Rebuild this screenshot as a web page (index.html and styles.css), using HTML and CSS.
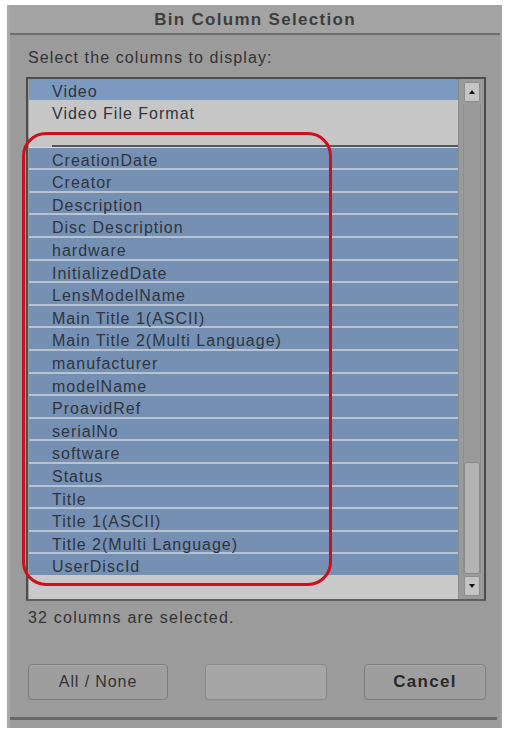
FILE: index.html
```html
<!DOCTYPE html>
<html>
<head>
<meta charset="utf-8">
<link rel="stylesheet" href="styles.css">
</head>
<body>
<div class="dialog">
  <div class="titlebar">Bin Column Selection</div>
  <div class="body">
    <div class="label">Select the columns to display:</div>
    <div class="listbox">
      <div class="rows">
        <div class="row sel top">Video</div>
        <div class="row plain">Video File Format</div>
        <div class="row plain blank"></div>
        <div class="row sel">CreationDate</div>
        <div class="row sel">Creator</div>
        <div class="row sel">Description</div>
        <div class="row sel">Disc Description</div>
        <div class="row sel">hardware</div>
        <div class="row sel">InitializedDate</div>
        <div class="row sel">LensModelName</div>
        <div class="row sel">Main Title 1(ASCII)</div>
        <div class="row sel">Main Title 2(Multi Language)</div>
        <div class="row sel">manufacturer</div>
        <div class="row sel">modelName</div>
        <div class="row sel">ProavidRef</div>
        <div class="row sel">serialNo</div>
        <div class="row sel">software</div>
        <div class="row sel">Status</div>
        <div class="row sel">Title</div>
        <div class="row sel">Title 1(ASCII)</div>
        <div class="row sel">Title 2(Multi Language)</div>
        <div class="row sel last">UserDiscId</div>
        <div class="row plain tail"></div>
      </div>
      <div class="scrollbar">
        <div class="sbtn"><span class="tri up"></span></div>
        <div class="track"><div class="thumb"></div></div>
        <div class="sbtn"><span class="tri down"></span></div>
      </div>
    </div>
    <div class="status">32 columns are selected.</div>
    <div class="buttons">
      <div class="btn">All / None</div>
      <div class="btn ghost"></div>
      <div class="btn bold">Cancel</div>
    </div>
  </div>
  <div class="footer"></div>
  <div class="highlight"></div>
</div>
</body>
</html>
```

FILE: styles.css
```css
html, body {
  margin: 0;
  padding: 0;
  background: #ffffff;
}
body {
  font-family: "Liberation Sans", Arial, sans-serif;
  color: #2b2b2b;
}
.dialog {
  position: relative;
  margin: 5px 0 0 7px;
  width: 495px;
  height: 723px;
  background: #9b9b9b;
  display: flex;
  flex-direction: column;
  box-sizing: border-box;
  border-left: 3px solid #a9a9a9;
  border-right: 2px solid #a4a4a4;
}
.titlebar {
  height: 30px;
  box-sizing: border-box;
  background: #a3a3a3;
  border-bottom: 2px solid #6f6f6f;
  text-align: center;
  font-weight: bold;
  font-size: 17px;
  letter-spacing: 1.3px;
  line-height: 30px;
  color: #3d3d3d;
  flex: none;
}
.body {
  padding: 0 14px 0 16px;
  display: flex;
  flex-direction: column;
  flex: 1;
}
.label {
  margin-top: 14px;
  height: 18px;
  line-height: 18px;
  font-size: 16px;
  letter-spacing: 1.1px;
  color: #333333;
  padding-left: 2px;
}
.listbox {
  margin-top: 10px;
  height: 524px;
  box-sizing: border-box;
  border: 2px solid #4b4b4b;
  border-bottom-color: #5e5e5e;
  display: flex;
  background: #9d9d9d;
}
.rows {
  flex: 1;
  display: flex;
  flex-direction: column;
  padding-left: 1px;
}
.row {
  box-sizing: border-box;
  height: 22.6px;
  line-height: 21px;
  padding-top: 2px;
  padding-left: 23px;
  font-size: 16px;
  letter-spacing: 1px;
  color: #2f3540;
  white-space: nowrap;
}
.sel {
  background: #7590b2;
  border-bottom: 2px solid #b7c3d0;
}
.sel.top {
  background: #7c99bf;
  height: 22px;
  border-bottom: 1px solid #bfc7cf;
}
.sel.last {
  border-bottom: none;
  height: 21px;
}
.plain {
  background: #c6c6c6;
}
.blank {
  height: 24px;
  position: relative;
  border-bottom: 1px solid #d3d8dd;
}
.blank::after {
  content: "";
  position: absolute;
  left: 23px;
  right: 0;
  bottom: 0;
  height: 2px;
  background: #575757;
}
.tail {
  flex: 1;
  height: auto;
  background: #c9c9c9;
}
.scrollbar {
  width: 26px;
  flex: none;
  display: flex;
  flex-direction: column;
  align-items: center;
  background: #9a9a9a;
  border-left: 1px solid #8a8a8a;
  padding: 3px 0 3px 0;
  box-sizing: border-box;
}
.sbtn {
  width: 14px;
  height: 18px;
  background: #c4c4c4;
  border: 1px solid #8d8d8d;
  border-radius: 2px;
  display: flex;
  align-items: center;
  justify-content: center;
  flex: none;
}
.tri {
  width: 0;
  height: 0;
  border-left: 3px solid transparent;
  border-right: 3px solid transparent;
}
.tri.up {
  border-bottom: 4px solid #111111;
}
.tri.down {
  border-top: 4px solid #111111;
}
.track {
  flex: 1;
  width: 18px;
  display: flex;
  flex-direction: column;
  border-left: 1px solid #8e8e8e;
  border-right: 1px solid #8e8e8e;
  box-sizing: border-box;
  margin: 2px 0;
}
.thumb {
  margin-top: auto;
  height: 112px;
  background: #b3b3b3;
  border: 1px solid #8a8a8a;
  border-radius: 3px;
  box-sizing: border-box;
}
.status {
  margin-top: 8px;
  font-size: 16px;
  letter-spacing: 1.2px;
  line-height: 18px;
  height: 18px;
  color: #333333;
  padding-left: 2px;
}
.buttons {
  margin-top: 37px;
  display: flex;
  justify-content: space-between;
  padding: 0 0 0 2px;
}
.btn {
  height: 36px;
  box-sizing: border-box;
  border: 1px solid #7d7d7d;
  border-radius: 4px;
  background: #9e9e9e;
  box-shadow: inset 0 1px 0 #ababab;
  text-align: center;
  line-height: 34px;
  font-size: 16px;
  letter-spacing: 0.9px;
  color: #333333;
  width: 140px;
}
.btn.ghost {
  width: 122px;
  background: #a6a6a6;
  border-color: #888888;
}
.btn.bold {
  width: 122px;
  font-weight: bold;
  font-size: 17px;
  letter-spacing: 1.3px;
  color: #2a2a2a;
}
.footer {
  margin: 0 3px 8px 0;
  height: 3px;
  background: #686868;
  flex: none;
}
.highlight {
  position: absolute;
  left: 12px;
  top: 127px;
  width: 310px;
  height: 454px;
  box-sizing: border-box;
  border: 3px solid #cc1020;
  border-radius: 24px;
  pointer-events: none;
}
```
